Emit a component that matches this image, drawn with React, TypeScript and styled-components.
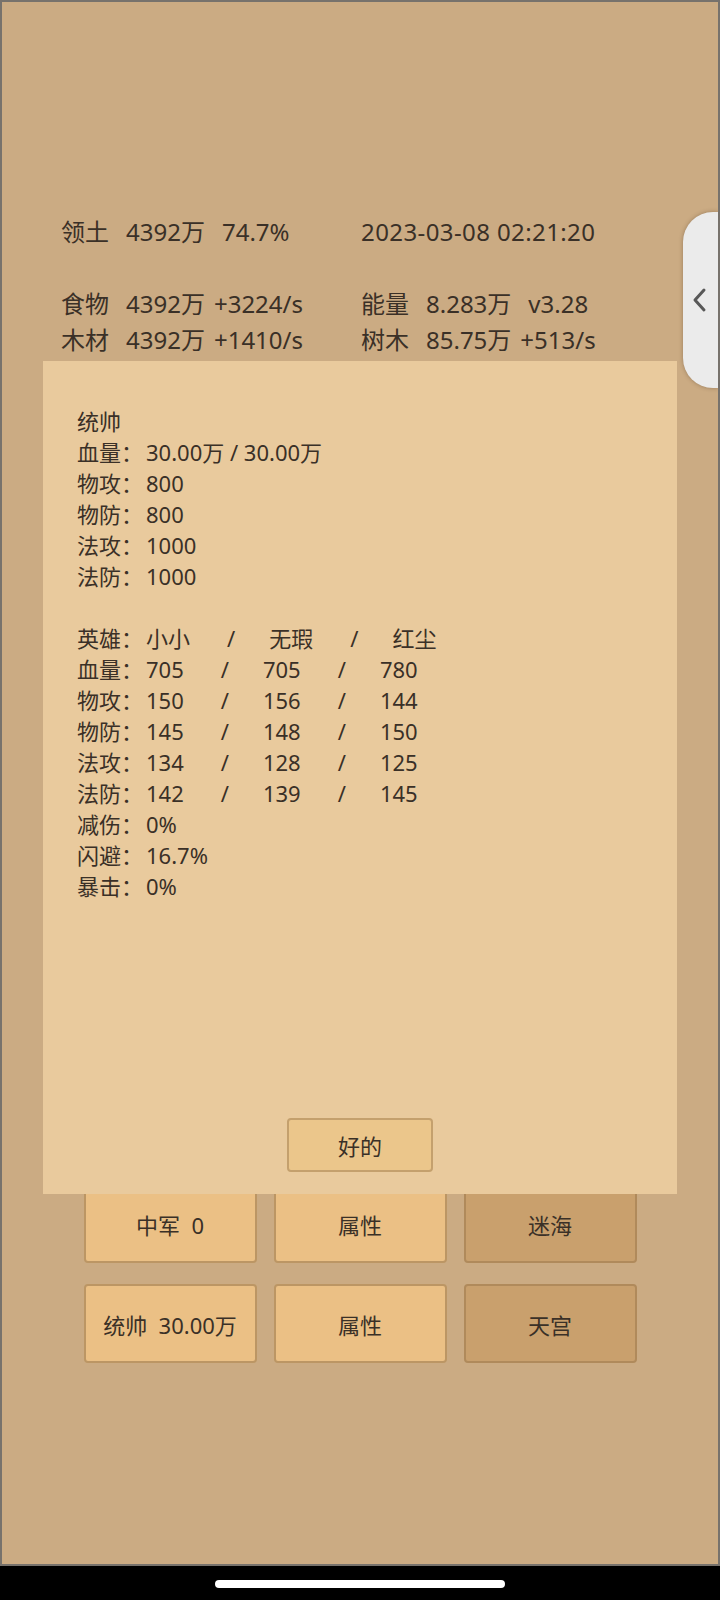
import styled, { createGlobalStyle } from "styled-components";

const GlobalStyle = createGlobalStyle`
  html, body {
    margin: 0;
    padding: 0;
    background: #000;
  }
  body {
    width: 720px;
    height: 1600px;
    overflow: hidden;
    font-family: "Noto Sans", "Noto Sans CJK SC", sans-serif;
  }
  * {
    box-sizing: border-box;
  }
`;

const Screen = styled.div`
  display: flex;
  flex-direction: column;
  width: 720px;
  height: 1600px;
`;

const Frame = styled.div`
  position: relative;
  display: flex;
  flex-direction: column;
  height: 1566px;
  overflow: hidden;
  background: #cbab83;
  border: 2px solid #77726c;
  color: #3a3027;
`;

const Stats = styled.div`
  display: grid;
  grid-template-columns: 300px 300px;
  padding: 212px 0 0 59px;
  font-size: 24px;
  line-height: 36px;
  white-space: pre;
`;

const StatCell = styled.div`
  display: flex;
  height: 36px;
`;

const StatKey = styled.span`
  width: 65px;
`;

const StatExtra = styled.span<{ $wide?: boolean }>`
  margin-left: ${(p) => (p.$wide ? "17px" : "9px")};
`;

const DateText = styled.span`
  letter-spacing: 0.4px;
`;

const ButtonGrid = styled.div`
  margin-top: auto;
  margin-bottom: 201px;
  display: grid;
  grid-template-columns: repeat(3, 173px);
  column-gap: 17px;
  row-gap: 21px;
  justify-content: center;
`;

const GameButton = styled.div<{ $dim?: boolean }>`
  height: 79px;
  display: flex;
  align-items: center;
  justify-content: center;
  font-size: 22px;
  white-space: pre;
  background: ${(p) => (p.$dim ? "#c9a06d" : "#ebc085")};
  border: 2px solid ${(p) => (p.$dim ? "#b08a5b" : "#bc9664")};
  border-radius: 4px;
  color: #3a3027;
`;

const Modal = styled.div`
  position: absolute;
  left: 41px;
  top: 359px;
  width: 634px;
  height: 833px;
  background: #e9ca9d;
  display: flex;
  flex-direction: column;
  padding: 45px 34px 22px;
`;

const InfoText = styled.div`
  flex: 1;
  font-size: 22px;
  line-height: 31px;
  white-space: pre;
`;

const InfoLine = styled.div`
  height: 31px;
`;

const Label = styled.span`
  display: inline-block;
  width: 69px;
`;

const Slash = styled.span`
  margin: 0 34px 0 37px;
`;

const OkButton = styled.div`
  align-self: center;
  width: 146px;
  height: 54px;
  display: flex;
  align-items: center;
  justify-content: center;
  font-size: 22px;
  background: #ebc68b;
  border: 2px solid #c4a06d;
  border-radius: 4px;
`;

const SideTab = styled.div`
  position: absolute;
  right: 0;
  top: 210px;
  width: 35px;
  height: 176px;
  background: #ebebeb;
  border-radius: 30px 0 0 30px;
  box-shadow: 0 0 4px rgba(60, 40, 20, 0.35);
  display: flex;
  align-items: center;
  padding-left: 8px;
`;

const NavBar = styled.div`
  height: 34px;
  background: #000;
  display: flex;
  justify-content: center;
  padding-top: 14px;
`;

const HomePill = styled.div`
  width: 290px;
  height: 8px;
  border-radius: 4px;
  background: #fff;
`;

type Stat = { key: string; value: string; extra: string; wide?: boolean };

const leftStats: Stat[] = [
  { key: "食物", value: "4392万", extra: "+3224/s" },
  { key: "木材", value: "4392万", extra: "+1410/s" },
];

const rightStats: Stat[] = [
  { key: "能量", value: "8.283万", extra: "v3.28", wide: true },
  { key: "树木", value: "85.75万", extra: "+513/s" },
];

const generalLines: [string, string][] = [
  ["统帅", ""],
  ["血量：", "30.00万 / 30.00万"],
  ["物攻：", "800"],
  ["物防：", "800"],
  ["法攻：", "1000"],
  ["法防：", "1000"],
  ["", ""],
];

const heroRows: [string, string[]][] = [
  ["英雄：", ["小小", "无瑕", "红尘"]],
  ["血量：", ["705", "705", "780"]],
  ["物攻：", ["150", "156", "144"]],
  ["物防：", ["145", "148", "150"]],
  ["法攻：", ["134", "128", "125"]],
  ["法防：", ["142", "139", "145"]],
];

const extraLines: [string, string][] = [
  ["减伤：", "0%"],
  ["闪避：", "16.7%"],
  ["暴击：", "0%"],
];

const buttons = [
  { label: "中军  0" },
  { label: "属性" },
  { label: "迷海", dim: true },
  { label: "统帅  30.00万" },
  { label: "属性" },
  { label: "天宫", dim: true },
];

const StatItem = ({ s }: { s: Stat }) => (
  <StatCell>
    <StatKey>{s.key}</StatKey>
    <span>{s.value}</span>
    <StatExtra $wide={s.wide}>{s.extra}</StatExtra>
  </StatCell>
);

const App = () => {
  return (
    <Screen>
      <GlobalStyle />
      <Frame>
        <Stats>
          <StatItem s={{ key: "领土", value: "4392万", extra: "74.7%", wide: true }} />
          <StatCell>
            <DateText>2023-03-08 02:21:20</DateText>
          </StatCell>
          <StatCell />
          <StatCell />
          {leftStats.map((s, i) => [
            <StatItem key={s.key} s={s} />,
            <StatItem key={rightStats[i].key} s={rightStats[i]} />,
          ])}
        </Stats>

        <ButtonGrid>
          {buttons.map((b, i) => (
            <GameButton key={i} $dim={b.dim}>
              {b.label}
            </GameButton>
          ))}
        </ButtonGrid>

        <Modal>
          <InfoText>
            {generalLines.map(([label, value], i) => (
              <InfoLine key={i}>
                {value ? <Label>{label}</Label> : label}
                {value}
              </InfoLine>
            ))}
            {heroRows.map(([label, vals]) => (
              <InfoLine key={label}>
                <Label>{label}</Label>
                {vals[0]}
                <Slash>/</Slash>
                {vals[1]}
                <Slash>/</Slash>
                {vals[2]}
              </InfoLine>
            ))}
            {extraLines.map(([label, value]) => (
              <InfoLine key={label}>
                <Label>{label}</Label>
                {value}
              </InfoLine>
            ))}
          </InfoText>
          <OkButton>好的</OkButton>
        </Modal>

        <SideTab>
          <svg width="18" height="26" viewBox="0 0 18 26">
            <polyline
              points="13,3 4,13 13,23"
              fill="none"
              stroke="#585858"
              strokeWidth="3"
              strokeLinecap="round"
              strokeLinejoin="round"
            />
          </svg>
        </SideTab>
      </Frame>
      <NavBar>
        <HomePill />
      </NavBar>
    </Screen>
  );
};

export default App;
